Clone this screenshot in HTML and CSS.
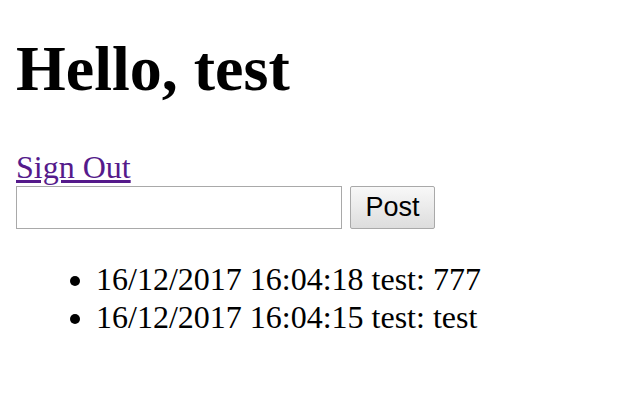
FILE: index.html
```html
<!DOCTYPE html>
<html>
<head>
<meta charset="utf-8">
<title>Chat</title>
<link rel="stylesheet" href="styles.css">
</head>
<body>
<h1 class="title">Hello, test</h1>
<a class="signout" href="#">Sign Out</a>
<form class="post-form">
  <input class="msg-input" type="text">
  <button class="post-btn" type="button">Post</button>
</form>
<ul class="messages">
  <li>16/12/2017 16:04:18 test: 777</li>
  <li>16/12/2017 16:04:15 test: test</li>
</ul>
</body>
</html>
```

FILE: styles.css
```css
html, body {
  background: #ffffff;
}
body {
  margin: 0;
  padding: 0 16px;
  font-family: "Liberation Serif", "Times New Roman", serif;
  font-size: 32px;
  color: #000;
}
.title {
  font-size: 64px;
  font-weight: bold;
  line-height: 74px;
  margin: 32px 0 43px;
}
.signout {
  color: #551a8b;
  text-decoration: underline;
  line-height: 37px;
  display: block;
  width: max-content;
}
.post-form {
  display: flex;
  gap: 8px;
  margin: 0;
  height: 43px;
}
.msg-input {
  box-sizing: border-box;
  width: 326px;
  height: 43px;
  border: 1px solid #a9a9a9;
  margin: 0;
  padding: 2px 4px;
  font-size: 26px;
  background: #fff;
}
.post-btn {
  box-sizing: border-box;
  width: 85px;
  height: 43px;
  margin: 0;
  padding: 0;
  border: 1px solid #a9a9a9;
  border-radius: 2px;
  background: linear-gradient(#f8f8f8, #dddddd);
  font-family: "Liberation Sans", Arial, sans-serif;
  font-size: 27px;
  color: #000;
}
.messages {
  margin: 31px 0 0;
  padding-left: 80px;
  line-height: 38px;
}
```
